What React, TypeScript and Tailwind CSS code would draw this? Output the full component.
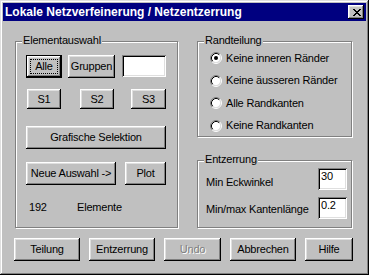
import React from 'react';

const raised =
  'shadow-[inset_-1px_-1px_#000,inset_1px_1px_#fff,inset_-2px_-2px_#808080,inset_2px_2px_#dfdfdf]';
const raisedDefault =
  'shadow-[inset_0_0_0_1px_#000,inset_-2px_-2px_#000,inset_2px_2px_#fff,inset_-3px_-3px_#808080,inset_3px_3px_#dfdfdf]';
const sunken =
  'shadow-[inset_1px_1px_#808080,inset_-1px_-1px_#fff,inset_2px_2px_#000,inset_-2px_-2px_#dfdfdf]';

function Btn({
  label,
  className,
  isDefault,
  disabled,
}: {
  label: string;
  className: string;
  isDefault?: boolean;
  disabled?: boolean;
}) {
  return (
    <button
      type="button"
      className={`flex items-center justify-center bg-[#c0c0c0] leading-[13px] shrink-0 ${
        isDefault ? raisedDefault : raised
      } ${className}`}
    >
      {isDefault ? (
        <span className="border border-dotted border-black px-[4px]">{label}</span>
      ) : disabled ? (
        <span className="text-[#808080] [text-shadow:1px_1px_#fff]">{label}</span>
      ) : (
        label
      )}
    </button>
  );
}

function TextBox({ value, className }: { value?: string; className: string }) {
  return (
    <div className={`bg-white ${sunken} pl-[3px] pt-[3px] leading-[11px] shrink-0 ${className}`}>
      {value}
    </div>
  );
}

function Radio({ on }: { on?: boolean }) {
  return (
    <svg width="12" height="12" viewBox="0 0 12 12" className="shrink-0">
      <circle cx="6" cy="6" r="4.5" fill="#fff" />
      <path d="M9.89 2.11A5.5 5.5 0 0 0 2.11 9.89" fill="none" stroke="#808080" />
      <path d="M2.11 9.89A5.5 5.5 0 0 0 9.89 2.11" fill="none" stroke="#fff" />
      <path d="M9.18 2.82A4.5 4.5 0 0 0 2.82 9.18" fill="none" stroke="#000" />
      <path d="M2.82 9.18A4.5 4.5 0 0 0 9.18 2.82" fill="none" stroke="#dfdfdf" />
      {on && <circle cx="6" cy="6" r="2" fill="#000" />}
    </svg>
  );
}

function Group({ title, className, children }: { title: string; className: string; children: React.ReactNode }) {
  return (
    <div
      className={`relative border border-[#808080] shadow-[inset_1px_1px_#fff,1px_1px_#fff] shrink-0 ${className}`}
    >
      <span className="absolute top-[-8px] left-[6px] bg-[#c0c0c0] px-[1px] leading-[13px]">{title}</span>
      {children}
    </div>
  );
}

const radios = ['Keine inneren Ränder', 'Keine äusseren Ränder', 'Alle Randkanten', 'Keine Randkanten'];

export default function App() {
  return (
    <div
      className={`w-[369px] h-[275px] bg-[#c0c0c0] flex flex-col text-black text-[11px] tracking-[-0.2px] font-['Liberation_Sans',Arial,sans-serif] shadow-[inset_-1px_-1px_#000,inset_1px_1px_#dfdfdf,inset_-2px_-2px_#808080,inset_2px_2px_#fff]`}
    >
      {/* Titelleiste */}
      <div className="mx-[3px] mt-[3px] h-[18px] bg-[#000080] flex items-center justify-between pl-[2px] pr-[2px]">
        <span className="text-white font-bold text-[12px] tracking-normal leading-[14px]">
          Lokale Netzverfeinerung / Netzentzerrung
        </span>
        <div className={`w-[16px] h-[14px] bg-[#c0c0c0] flex items-center justify-center pl-[1px] ${raised}`}>
          <svg width="8" height="7" viewBox="0 0 8 7" shapeRendering="crispEdges">
            <path
              d="M0 0h2v1H0zM6 0h2v1H6zM1 1h2v1H1zM5 1h2v1H5zM2 2h4v1H2zM3 3h2v1H3zM2 4h4v1H2zM1 5h2v1H1zM5 5h2v1H5zM0 6h2v1H0zM6 6h2v1H6z"
              fill="#000"
            />
          </svg>
        </div>
      </div>

      <div className="flex pl-[15px] mt-[20px]">
        {/* Elementauswahl */}
        <Group title="Elementauswahl" className="w-[163px] h-[187px]">
          <div className="flex flex-col pl-[10px] pt-[13px]">
            <div className="flex items-start">
              <Btn label="Alle" isDefault className="w-[36px] h-[23px]" />
              <Btn label="Gruppen" className="w-[47px] h-[23px] ml-[6px]" />
              <TextBox className="w-[44px] h-[22px] ml-[7px]" />
            </div>
            <div className="flex items-start mt-[11px]">
              <Btn label="S1" className="w-[34px] h-[20px] ml-[1px]" />
              <Btn label="S2" className="w-[34px] h-[20px] ml-[19px]" />
              <Btn label="S3" className="w-[35px] h-[20px] ml-[17px]" />
            </div>
            <div className="flex mt-[17px]">
              <Btn label="Grafische Selektion" className="w-[140px] h-[23px]" />
            </div>
            <div className="flex mt-[13px]">
              <Btn label="Neue Auswahl ->" className="w-[90px] h-[23px]" />
              <Btn label="Plot" className="w-[41px] h-[23px] ml-[9px]" />
            </div>
            <div className="flex mt-[16px] leading-[13px]">
              <span className="w-[48px] ml-[3px]">192</span>
              <span>Elemente</span>
            </div>
          </div>
        </Group>

        <div className="flex flex-col ml-[19px] w-[155px]">
          {/* Randteilung */}
          <Group title="Randteilung" className="w-[155px] h-[96px]">
            <div className="flex flex-col pl-[12px] pt-[5px]">
              {radios.map((r, i) => (
                <div key={r} className="flex items-center h-[22.5px]">
                  <Radio on={i === 0} />
                  <span className="ml-[4px] leading-[13px]">{r}</span>
                </div>
              ))}
            </div>
          </Group>

          {/* Entzerrung */}
          <Group title="Entzerrung" className="w-[155px] h-[68px] mt-[23px]">
            <div className="flex flex-col pl-[8px] pt-[7px]">
              <div className="flex items-start">
                <span className="w-[112px] mt-[8px] leading-[13px]">Min Eckwinkel</span>
                <TextBox value="30" className="w-[29px] h-[22px]" />
              </div>
              <div className="flex items-start mt-[7px]">
                <span className="w-[112px] mt-[6px] leading-[13px]">Min/max Kantenlänge</span>
                <TextBox value="0.2" className="w-[29px] h-[22px]" />
              </div>
            </div>
          </Group>
        </div>
      </div>

      <div className="flex pl-[14px] mt-[10px] gap-[9px]">
        <Btn label="Teilung" className="w-[66px] h-[23px]" />
        <Btn label="Entzerrung" className="w-[66px] h-[23px]" />
        <Btn label="Undo" disabled className="w-[57px] h-[23px]" />
        <Btn label="Abbrechen" className="w-[66px] h-[23px]" />
        <Btn label="Hilfe" className="w-[48px] h-[23px]" />
      </div>
    </div>
  );
}
